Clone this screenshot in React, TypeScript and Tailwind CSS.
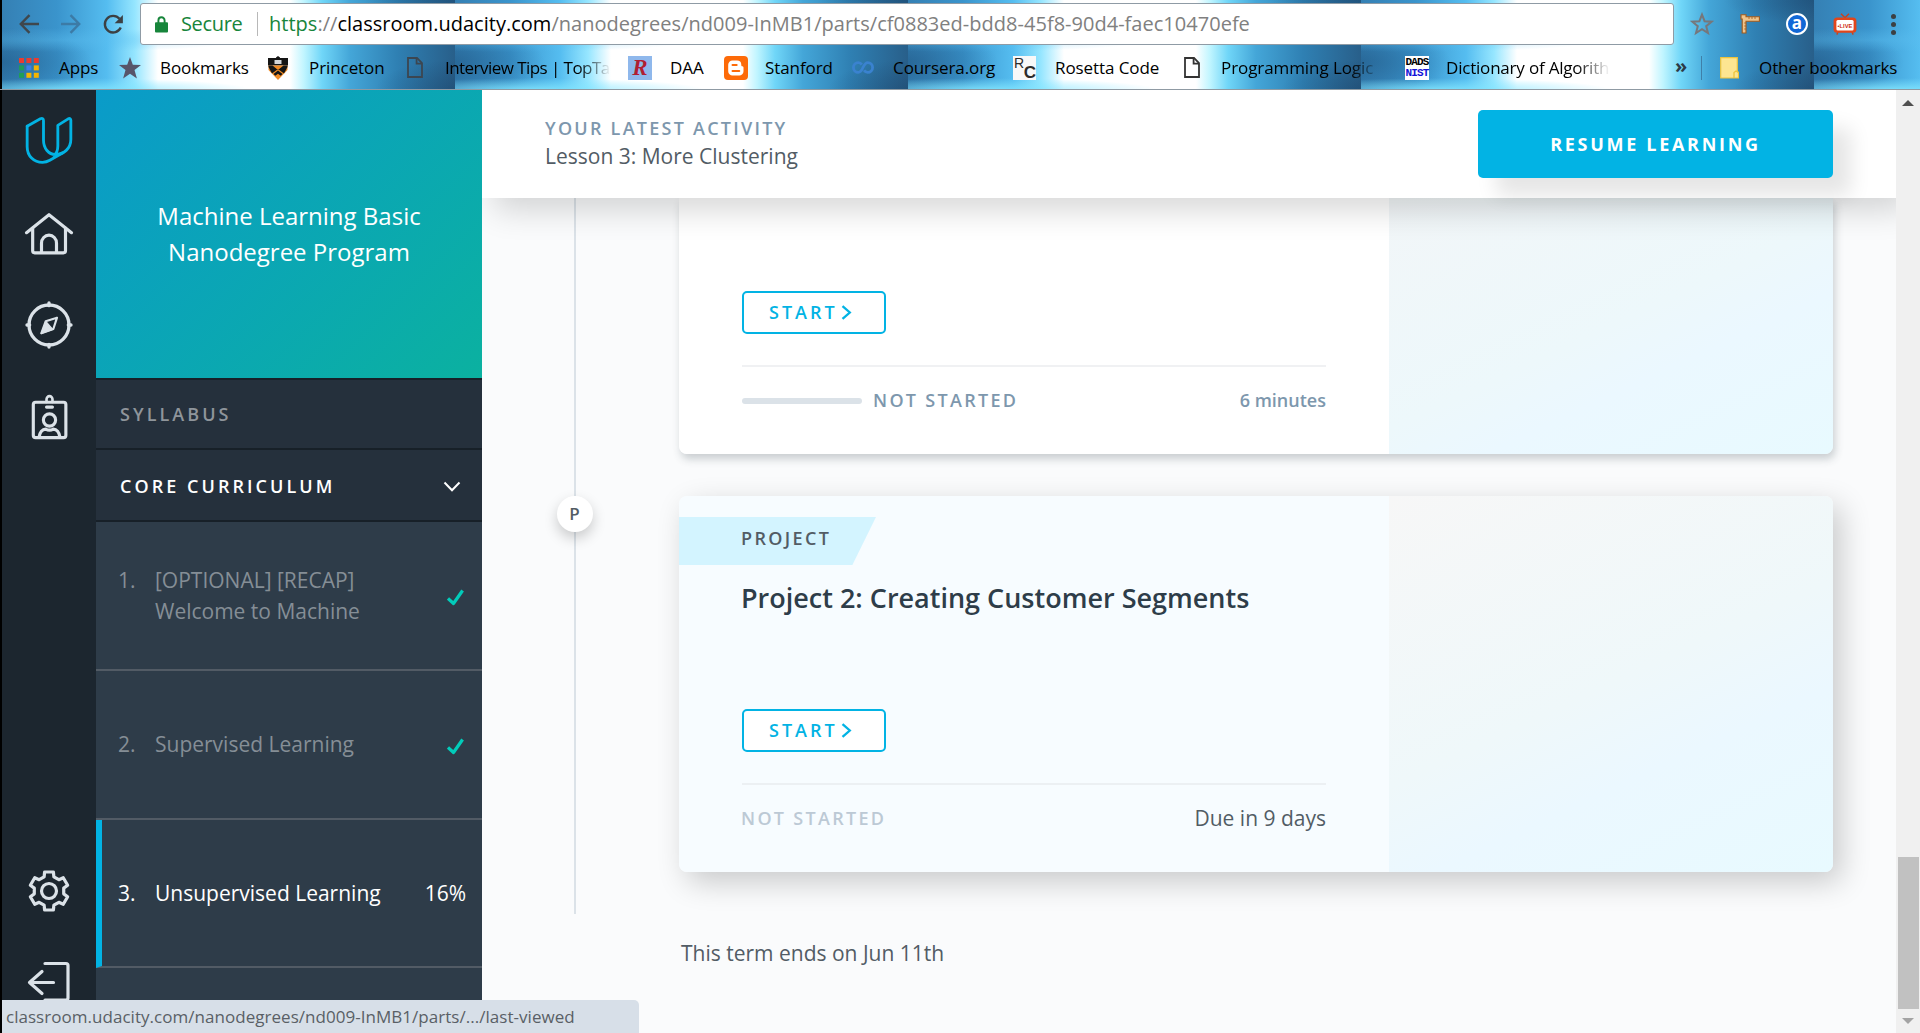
import React from "react";

type SvgProps = { className?: string };

/* ---------- browser toolbar icons ---------- */

const BackArrow = ({ className }: SvgProps) => (
  <svg viewBox="0 0 20 20" className={className} fill="none" stroke="currentColor" strokeWidth="2.4">
    <path d="M20 10H1.8M10.5 1.2L1.8 10l8.7 8.8" />
  </svg>
);

const ForwardArrow = ({ className }: SvgProps) => (
  <svg viewBox="0 0 20 20" className={className} fill="none" stroke="currentColor" strokeWidth="2.4">
    <path d="M0 10h18.2M9.5 1.2l8.7 8.8-8.7 8.8" />
  </svg>
);

const Reload = ({ className }: SvgProps) => (
  <svg viewBox="0 0 22 22" className={className} fill="none" stroke="currentColor" strokeWidth="2.5">
    <path d="M18.6 14.2A8.7 8.7 0 1 1 17.3 5" />
    <path d="M20.8 1v8.6h-8.6z" fill="currentColor" stroke="none" />
  </svg>
);

const Lock = ({ className }: SvgProps) => (
  <svg viewBox="0 0 13 17" className={className}>
    <path d="M3.4 7V4.4a3.1 3.1 0 0 1 6.2 0V7" fill="none" stroke="#17853b" strokeWidth="1.9" />
    <rect x="0" y="6.2" width="13" height="10.2" rx="1" fill="#17853b" />
  </svg>
);

const StarOutline = ({ className }: SvgProps) => (
  <svg viewBox="0 0 24 24" className={className} fill="none" stroke="#76777b" strokeWidth="2">
    <path d="M12 2.6l2.6 6.6 7 .5-5.4 4.5 1.8 6.900-6-3.900-6 3.900 1.800-6.900L2.400 9.700l7-.5z" />
  </svg>
);

const RulerTool = ({ className }: SvgProps) => (
  <svg viewBox="0 0 20 20" className={className}>
    <path d="M1 .8h5v2h13.400v4.400H6V19H2.200V5H1z" fill="#eec48c" stroke="#a05a1c" strokeWidth="1.1" />
    <path d="M9 3v2M12 3v2M15 3v2M4.200 9h1.800M4.200 12h1.800M4.200 15h1.800" stroke="#a05a1c" strokeWidth=".8" />
  </svg>
);

const LiveTv = ({ className }: SvgProps) => (
  <svg viewBox="0 0 24 22" className={className}>
    <path d="M8 .8l4 4 4-4M5 19l-1.200 2.600M19 19l1.200 2.600" stroke="#c9421c" strokeWidth="1.400" fill="none" />
    <rect x=".6" y="4.600" width="22.800" height="15.200" rx="3.500" fill="#e2461b" />
    <rect x="3.400" y="7" width="17.200" height="10.400" rx="1.500" fill="#fff" />
    <text x="12" y="14.600" textAnchor="middle" fontSize="5.800" fontWeight="700" fontFamily="Liberation Sans, sans-serif" fill="#d02c10">•LIVE</text>
  </svg>
);

/* ---------- bookmark favicons ---------- */

const APP_COLOURS = ["#ea3b2f", "#ea3b2f", "#ea3b2f", "#1f9d58", "#3d7fe8", "#f5b400", "#1f9d58", "#f5b400", "#f5b400"];

const AppsGrid = () => (
  <svg viewBox="0 0 20 20" className="h-5 w-5">
    {APP_COLOURS.map((c, i) => (
      <rect key={i} x={(i % 3) * 7.4} y={Math.floor(i / 3) * 7.4} width="5" height="5" fill={c} />
    ))}
  </svg>
);

const StarSolid = () => (
  <svg viewBox="0 0 22 22" className="h-[22px] w-[22px]">
    <path d="M11 0l2.800 7.700 8.200.3-6.500 5.100 2.400 8.300-6.900-4.700-6.900 4.700 2.400-8.300L0 8l8.200-.3z" fill="#57556a" />
  </svg>
);

const Shield = () => (
  <svg viewBox="0 0 22 24" className="h-6 w-[22px]">
    <path d="M9 1.500L11 0l2 1.500V2h8v7.500H1V2h8z" fill="#151515" />
    <path d="M7.500 4h7v4h-7z" fill="#d3d6da" />
    <path d="M1.500 9.500h19V14L11 24l-9.500-10z" fill="#f08a24" />
    <path d="M1.500 9.500h4L11 14l5.500-4.500h4V11L17 17.500 11 13l-6 4.500L1.500 11z" fill="#151515" />
    <path d="M6.500 18L11 14.500l4.500 3.500-1.800 1.800L11 17.800l-2.700 2z" fill="#151515" />
  </svg>
);

const PageIcon = ({ className }: SvgProps) => (
  <svg viewBox="0 0 16 21" className={"h-[21px] w-4 " + (className ?? "")} fill="none" stroke="currentColor" strokeWidth="1.800">
    <path d="M1 1h9l5 5.200V20H1z" />
    <path d="M9.600 1v5.600H15" />
  </svg>
);

const ScriptR = () => (
  <div className="flex h-6 w-6 items-center justify-center bg-[#8fb8ec] font-['Liberation_Serif',serif] text-[23px] leading-none font-bold text-[#b01e32] italic">R</div>
);

const Blogger = () => (
  <svg viewBox="0 0 24 24" className="h-6 w-6">
    <rect width="24" height="24" rx="4" fill="#fd6a08" />
    <path d="M8.500 4.500H13a4.300 4.300 0 0 1 4.300 4.200c0 1 .3 1.500 1.200 1.600.7.100 1 .5 1 1.200v3.700a4.300 4.300 0 0 1-4.300 4.300H8.500a4.300 4.300 0 0 1-4.300-4.300V8.800a4.300 4.300 0 0 1 4.300-4.300z" fill="#fff" />
    <path d="M8.600 9h4M8.600 15h6.600" stroke="#fd6a08" strokeWidth="2.200" strokeLinecap="round" />
  </svg>
);

const Coursera = () => (
  <svg viewBox="0 0 22 13" className="h-[13px] w-[22px]" fill="none" stroke="#3a82cf" strokeWidth="2.800">
    <path d="M9.800 3.600C8.700 2 7.500 1.600 6.300 1.600a4.800 4.800 0 0 0 0 9.800c5 0 4.400-9.800 9.400-9.800a4.800 4.800 0 0 1 0 9.800c-1.600 0-2.700-.7-3.600-2.100" />
  </svg>
);

const RosettaIcon = () => (
  <div className="relative h-6 w-[23px] bg-[#f8f8f8] font-['Liberation_Sans',sans-serif] font-bold text-[#2b2b2b]">
    <span className="absolute top-0 left-px text-[14px] leading-none font-normal">R</span>
    <span className="absolute right-0 -bottom-px text-[17px] leading-none">C</span>
  </div>
);

const DadsIcon = () => (
  <div className="flex h-6 w-6 flex-col items-center justify-center bg-white font-['Liberation_Mono',monospace] text-[11px] leading-[11px] font-bold tracking-[-0.8px]">
    <span className="text-black">DADS</span>
    <span className="text-[#1414d8]">NIST</span>
  </div>
);

const FolderIcon = () => (
  <svg viewBox="0 0 19 22" className="h-[22px] w-[19px]">
    <path d="M.7.700h16.600V14l1.200 1.500V21H.7z" fill="#fde591" stroke="#efc43c" strokeWidth="1.200" />
    <path d="M14 21v-5.500l2-1.500 2.300 1.500" fill="none" stroke="#efc43c" strokeWidth="1.300" />
  </svg>
);

const BOOKMARKS: { label: string; icon: React.ReactNode; item: string; slot: string; fade?: string }[] = [
  { label: "Apps", icon: <AppsGrid />, item: "w-[100px]", slot: "w-[40px]" },
  { label: "Bookmarks", icon: <StarSolid />, item: "w-[148px]", slot: "w-[41px]" },
  { label: "Princeton", icon: <Shield />, item: "w-[140px]", slot: "w-[42px]" },
  { label: "Interview Tips | TopTal", icon: <PageIcon className="text-[#3c4650]" />, item: "w-[221px]", slot: "w-[38px]", fade: "w-[166px] tracking-[-0.55px]" },
  { label: "DAA", icon: <ScriptR />, item: "w-[96px]", slot: "w-[42px]" },
  { label: "Stanford", icon: <Blogger />, item: "w-[128px]", slot: "w-[41px]" },
  { label: "Coursera.org", icon: <Coursera />, item: "w-[161px]", slot: "w-[41px]" },
  { label: "Rosetta Code", icon: <RosettaIcon />, item: "w-[171px]", slot: "w-[42px]" },
  { label: "Programming Logic", icon: <PageIcon className="text-[#333]" />, item: "w-[221px]", slot: "w-[37px]", fade: "w-[160px]" },
  { label: "Dictionary of Algorithms", icon: <DadsIcon />, item: "w-[270px]", slot: "w-[41px]", fade: "w-[164px] tracking-[-0.2px]" },
];

/* ---------- rail icons ---------- */

const Udacity = () => (
  <svg viewBox="72 78 150 150" className="h-[50px] w-[50px]" fill="none" stroke="#02b3e4" strokeWidth="8.500" strokeLinejoin="round" strokeLinecap="round">
    <path d="M81.500 108.500L121 86.500q9.500-4 9.500 6V150c0 26 16 43.500 35 43.500 26 0 47-18 47-45V91q0-8-8-4.500L173.500 106v62q0 20-12 28.500" />
    <path d="M81.500 108.500V170c0 28 20 47 46 47 9 0 16-2.500 22-6l38-22" />
  </svg>
);

const Home = () => (
  <svg viewBox="72 360 150 140" className="h-[47px] w-[50px]" fill="none" stroke="#dbe2e8" strokeWidth="9.500" strokeLinejoin="round" strokeLinecap="round">
    <path d="M79.500 427.500L147 373.500l67.500 54" />
    <path d="M98 414v68q0 6 6 6h86q6.500 0 6.500-6v-68" />
    <path d="M124.500 487v-28a22.500 24 0 0 1 45 0v28" />
  </svg>
);

const Compass = () => (
  <svg viewBox="72 631 150 150" className="h-[50px] w-[50px]" fill="none" stroke="#dbe2e8" strokeWidth="10" strokeLinejoin="round" strokeLinecap="round">
    <circle cx="147" cy="706" r="60" />
    <path d="M147 640v8M147 764v8M81 706h8M205 706h8" />
    <path d="M171 684l-34 11-13 36 36-13z" strokeWidth="6.500" />
    <path d="M138 696l-14 35 34-12z" fill="#dbe2e8" strokeWidth="4" />
  </svg>
);

const Badge = () => (
  <svg viewBox="85 910 124 145" className="h-[48px] w-[41px]" fill="none" stroke="#dbe2e8" strokeWidth="9.500" strokeLinejoin="round" strokeLinecap="round">
    <rect x="98" y="938" width="98.500" height="107" rx="7" />
    <path d="M138 937v-8a9 9.500 0 0 1 18 0v8" strokeWidth="8" />
    <path d="M138 952.500h18" />
    <circle cx="147" cy="991.500" r="18.500" />
    <path d="M115.500 1043c2-14 10-24 20-24q11.500 6.500 23 0c10 0 18 10 20 24" />
  </svg>
);

/* Six-toothed outline built from polar points around the centre. */
const GEAR_PATH = (() => {
  const profile: [number, number][] = [
    [-13, 19.5],
    [13, 19.5],
    [19, 15],
    [41, 15],
  ];
  const pts: string[] = [];
  for (let tooth = 0; tooth < 6; tooth++) {
    for (const [deg, r] of profile) {
      const a = ((tooth * 60 + deg - 90) * Math.PI) / 180;
      pts.push(`${(24 + r * Math.cos(a)).toFixed(2)} ${(24 + r * Math.sin(a)).toFixed(2)}`);
    }
  }
  return "M" + pts.join("L") + "Z";
})();

const Gear = () => (
  <svg viewBox="0 0 48 48" className="h-12 w-12" fill="none" stroke="#dbe2e8" strokeWidth="3.200" strokeLinejoin="round">
    <path d={GEAR_PATH} />
    <circle cx="24" cy="24" r="7.500" />
  </svg>
);

const Logout = () => (
  <svg viewBox="0 0 44 42" className="h-[42px] w-11" fill="none" stroke="#dbe2e8" strokeWidth="3.200" strokeLinejoin="round" strokeLinecap="round">
    <path d="M18 2.500h21q2 0 2 2v32.500q0 2-2 2H18" />
    <path d="M26.500 21.500H2.500M15 10.500L2.500 21.500 15 32.500" />
  </svg>
);

const ChevronDown = () => (
  <svg viewBox="0 0 18 12" className="mt-[2px] h-3 w-[18px]" fill="none" stroke="#fff" strokeWidth="2">
    <path d="M1.500 1.500L9 9.300l7.500-7.800" />
  </svg>
);

const ChevronRight = () => (
  <svg viewBox="0 0 11 15" className="h-[15px] w-[11px]" fill="none" stroke="#02b3e4" strokeWidth="2.300">
    <path d="M1.500 1.200l7.300 6.300-7.300 6.300" />
  </svg>
);

const Check = () => (
  <svg viewBox="0 0 17 17" className="mt-[3px] mr-[2px] h-[17px] w-[17px]" fill="none" stroke="#02ccba" strokeWidth="3.200">
    <path d="M1 9.500l5.500 5L15.600 1.500" strokeLinejoin="round" />
  </svg>
);

/* ---------- page pieces ---------- */

function StartButton() {
  return (
    <button className="flex h-[43px] w-36 items-center rounded-[5px] border-2 border-[#02b3e4] bg-white pl-[25px] text-[18px] font-semibold tracking-[3px] text-[#02b3e4]">
      START
      <span className="ml-[3px]">
        <ChevronRight />
      </span>
    </button>
  );
}

function BrowserChrome() {
  return (
    <header className="relative h-[90px] shrink-0 overflow-hidden border-b border-[#8f9aa3] font-['Open_Sans','Noto_Sans',sans-serif]">
      <div className="absolute inset-0 flex pl-[2px]">
        {[0, 1, 2, 3, 4].map((i) => (
          <div
            key={i}
            className="h-full w-[453px] shrink-0 bg-[radial-gradient(ellipse_170px_12px_at_80px_90px,rgba(130,230,255,0.9),transparent),radial-gradient(ellipse_180px_12px_at_60px_40px,rgba(90,190,240,0.45),transparent),radial-gradient(ellipse_90px_34px_at_0px_62px,rgba(30,85,130,0.55),transparent),radial-gradient(ellipse_90px_24px_at_453px_0px,rgba(25,70,110,0.45),transparent),radial-gradient(ellipse_80px_30px_at_453px_90px,rgba(25,60,95,0.4),transparent),linear-gradient(90deg,#3580b4_0px,#3a94cc_55px,#55bdf0_105px,#96e6ff_133px,#ffffff_156px,#ffffff_288px,#c0f5ff_302px,#70d6f8_320px,#44a6d8_348px,#2f80b3_395px,#285f8a_453px)]"
          />
        ))}
      </div>

      <div className="relative flex h-[45px] items-center pt-[3px]">
        <BackArrow className="ml-[19px] h-5 w-5 text-[#3f474d]" />
        <ForwardArrow className="ml-[22px] h-5 w-5 text-[#3c7ba6]" />
        <Reload className="ml-[22px] h-[21px] w-[21px] text-[#3c4043]" />
        <div className="ml-4 flex h-[42px] w-[1534px] items-center rounded-[3px] border border-[#8f9ba5] bg-white pl-[14px] whitespace-nowrap">
          <Lock className="h-[17px] w-[13px]" />
          <span className="ml-[13px] w-[62px] pb-px text-[20px] tracking-[-0.35px] text-[#17853b]">Secure</span>
          <span className="ml-[14px] h-6 w-px bg-[#b8b8b8]" />
          <span className="ml-[11px] text-[20px] tracking-[0.02px] text-[#808080]">
            <span className="text-[#17853b]">https</span>://<span className="text-black">classroom.udacity.com</span>
            /nanodegrees/nd009-InMB1/parts/cf0883ed-bdd8-45f8-90d4-faec10470efe
          </span>
        </div>
        <StarOutline className="ml-4 h-6 w-6" />
        <RulerTool className="ml-[26px] h-5 w-5" />
        <div className="ml-[26px] flex h-[22px] w-[22px] items-center justify-center rounded-full border-2 border-white bg-[#1268d6] pb-[3px] font-['Open_Sans',sans-serif] text-[17px] leading-none font-bold text-white">
          a
        </div>
        <LiveTv className="ml-[25px] h-[22px] w-6" />
        <div className="ml-[34px] flex flex-col gap-[3px]">
          <span className="h-[5px] w-[5px] rounded-full bg-[#3c4043]" />
          <span className="h-[5px] w-[5px] rounded-full bg-[#3c4043]" />
          <span className="h-[5px] w-[5px] rounded-full bg-[#3c4043]" />
        </div>
      </div>

      <div className="relative flex h-[45px] items-center pl-[19px] text-[17px] tracking-[-0.08px] whitespace-nowrap text-black">
        {BOOKMARKS.map((b) => (
          <div key={b.label} className={`flex shrink-0 items-center ${b.item}`}>
            <div className={`shrink-0 ${b.slot}`}>{b.icon}</div>
            {b.fade ? (
              <span className={`overflow-hidden [mask-image:linear-gradient(90deg,#000_80%,transparent)] ${b.fade}`}>{b.label}</span>
            ) : (
              <span>{b.label}</span>
            )}
          </div>
        ))}
        <span className="w-[26px] pb-1 text-[20px] font-bold text-[#2c3a46]">»</span>
        <span className="h-6 w-px bg-[#3f7fa8]" />
        <div className="ml-[18px] w-[39px]">
          <FolderIcon />
        </div>
        <span>Other bookmarks</span>
      </div>
    </header>
  );
}

function Rail() {
  return (
    <nav className="flex w-[94px] shrink-0 flex-col items-center bg-[#1c262f]">
      <div className="mt-[26px]"><Udacity /></div>
      <div className="mt-[44px]"><Home /></div>
      <div className="mt-[43px]"><Compass /></div>
      <div className="mt-[43px]"><Badge /></div>
      <div className="mt-[426px]"><Gear /></div>
      <div className="mt-[46px]"><Logout /></div>
    </nav>
  );
}

function LessonRow({ n, children, right, active, tall }: { n: string; children: React.ReactNode; right: React.ReactNode; active?: boolean; tall?: boolean }) {
  return (
    <li
      className={
        "flex shrink-0 items-center border-b-2 border-b-[#525b65] pr-[16px] text-[21px] leading-[31px] " +
        (tall ? "h-[149px] " : "h-[148px] ") +
        (active ? "border-l-[6px] border-l-[#02b3e4] pl-[16px] text-white" : "pl-[22px] text-[#858e96]")
      }
    >
      <span className="w-[37px] shrink-0">{n}</span>
      <span className="grow">{children}</span>
      {right}
    </li>
  );
}

function SyllabusPanel() {
  return (
    <aside className="flex w-[386px] shrink-0 flex-col overflow-hidden bg-[#2e3c49]">
      <div className="flex h-[288px] shrink-0 items-center justify-center bg-linear-[135deg,#0a9bc9,#0bb1a0] pb-[1px] text-center text-[24px] leading-9 text-white">
        Machine Learning Basic
        <br />
        Nanodegree Program
      </div>
      <div className="flex h-[72px] shrink-0 items-center border-y-2 border-[#172028] bg-[#25303c] pl-[24px] text-[18px] font-semibold tracking-[3.050px] text-[#8f959b]">
        SYLLABUS
      </div>
      <div className="flex h-[72px] shrink-0 items-center justify-between border-b-2 border-[#172028] bg-[#25303c] pt-[2px] pr-[21px] pl-[24px] text-[18px] font-semibold tracking-[3.050px] text-white">
        CORE CURRICULUM
        <ChevronDown />
      </div>
      <ol className="flex flex-col">
        <li className="flex h-[149px] shrink-0 items-center border-b-2 border-[#525b65] pr-[16px] pl-[22px] text-[21px] leading-[31px] text-[#858e96]">
          <span className="w-[37px] shrink-0 pb-[31px]">1.</span>
          <span className="grow">
            [OPTIONAL] [RECAP]
            <br />
            Welcome to Machine
          </span>
          <Check />
        </li>
        <LessonRow n="2." right={<Check />} tall>Supervised Learning</LessonRow>
        <LessonRow n="3." right={<span>16%</span>} active>Unsupervised Learning</LessonRow>
      </ol>
    </aside>
  );
}

function ActivityBar() {
  return (
    <div className="relative z-10 flex h-[108px] shrink-0 items-start justify-between bg-white pr-[63px] pl-[63px] shadow-[12px_12px_30px_rgba(0,0,0,0.16)]">
      <div className="pt-[25px]">
        <div className="text-[18px] leading-[27px] font-semibold tracking-[2.250px] text-[#7d97ad]">YOUR LATEST ACTIVITY</div>
        <div className="text-[21px] leading-[29px] text-[#525c65]">Lesson 3: More Clustering</div>
      </div>
      <button className="mt-5 flex h-[68px] w-[355px] items-center justify-center rounded-[5px] bg-[#02b3e4] pl-0 text-[18px] font-bold tracking-[2.700px] text-white shadow-[18px_18px_20px_rgba(0,0,0,0.1)]">
        RESUME LEARNING
      </button>
    </div>
  );
}

function App() {
  return (
    <div className="relative flex h-[1033px] w-[1920px] flex-col overflow-hidden bg-black font-['Open_Sans','Noto_Sans',sans-serif]">
      <BrowserChrome />
      <div className="flex min-h-0 grow pl-[2px]">
        <Rail />
        <SyllabusPanel />
        <main className="flex w-[1414px] shrink-0 flex-col overflow-hidden bg-[#fafbfc]">
          <ActivityBar />
          <div className="flex pl-[74px]">
            {/* timeline */}
            <div className="flex w-[38px] shrink-0 flex-col items-center">
              <span className="h-[298px] w-[2px] bg-[#dbe2e8]" />
              <span className="z-[1] mr-px flex h-9 w-9 shrink-0 items-center justify-center rounded-full bg-white text-[17px] font-semibold text-[#525c65] shadow-[0_6px_14px_rgba(0,0,0,0.2)]">P</span>
              <span className="h-[382px] w-[2px] bg-[#dbe2e8]" />
            </div>

            <div className="ml-[85px] flex w-[1154px] shrink-0 flex-col">
              <section className="flex h-[256px] rounded-b-[8px] shadow-[2px_5px_9px_rgba(46,61,73,0.24)]">
                <div className="flex w-[710px] flex-col rounded-bl-[8px] bg-white pt-[93px] pr-[63px] pl-[63px]">
                  <StartButton />
                  <div className="mt-[31px] h-[2px] bg-[#f0f1f3]" />
                  <div className="mt-[20px] flex h-[27px] items-center text-[18px] font-semibold text-[#7d97ad]">
                    <span className="h-[6px] w-[120px] rounded-full bg-[#dbe2e8]" />
                    <span className="ml-[11px] grow tracking-[2.300px]">NOT STARTED</span>
                    <span>6 minutes</span>
                  </div>
                </div>
                <div className="grow rounded-br-[8px] bg-linear-[155deg,#f2f6f8,#edf8fb_50%,#ebf8ff_65%,#e8faff]" />
              </section>

              <section className="mt-[42px] flex h-[376px] rounded-[8px] shadow-[8px_10px_30px_rgba(0,0,0,0.2)]">
                <div className="flex w-[710px] flex-col rounded-l-[8px] bg-[#f7fcff] pt-[21px] pr-[63px]">
                  <div className="flex h-12 w-[197px] items-start bg-[#d3f4ff] pt-[8px] pl-[62px] text-[18px] leading-[27px] font-semibold tracking-[2.350px] text-[#525c65] [clip-path:polygon(0_0,100%_0,88%_100%,0_100%)]">
                    PROJECT
                  </div>
                  <div className="mt-[13px] pl-[62px] text-[27px] leading-[40px] font-semibold whitespace-nowrap text-[#2e3d49]">
                    Project 2: Creating Customer Segments
                  </div>
                  <div className="mt-[91px] pl-[63px]">
                    <StartButton />
                    <div className="mt-[31px] h-[2px] bg-[#ecf0f3]" />
                    <div className="mt-[18px] flex h-[31px] items-center justify-between">
                      <span className="-ml-px text-[18px] font-semibold tracking-[2.300px] text-[#bcc9d5]">NOT STARTED</span>
                      <span className="text-[21px] text-[#525c65]">Due in 9 days</span>
                    </div>
                  </div>
                </div>
                <div className="grow rounded-r-[8px] bg-linear-[155deg,#f7f7f7,#eff8fa_50%,#ebf8ff_68%,#e8faff]" />
              </section>

              <p className="mt-[66px] pl-[2px] text-[21px] leading-[31px] text-[#525c65]">This term ends on Jun 11th</p>
            </div>
          </div>
        </main>

        {/* scrollbar */}
        <div className="flex w-6 shrink-0 flex-col items-center bg-[#f0f0f0]">
          <svg viewBox="0 0 12 6" className="mt-[10px] h-[6px] w-3"><path d="M0 6L6 0l6 6z" fill="#505050" /></svg>
          <div className="mt-[751px] h-[152px] w-[21px] shrink-0 bg-[#c1c1c1]" />
          <svg viewBox="0 0 12 6" className="mt-[9px] h-[6px] w-3"><path d="M0 0h12L6 6z" fill="#a3a3a3" /></svg>
        </div>
      </div>

      {/* link status bubble */}
      <div className="absolute bottom-0 left-[2px] z-20 flex h-[33px] w-[637px] items-center rounded-tr-[5px] bg-[#d7dfe8] pt-px pl-1 text-[17px] tracking-[0.035px] whitespace-nowrap text-[#5a5f66]">
        classroom.udacity.com/nanodegrees/nd009-InMB1/parts/.../last-viewed
      </div>
    </div>
  );
}

export default App;
